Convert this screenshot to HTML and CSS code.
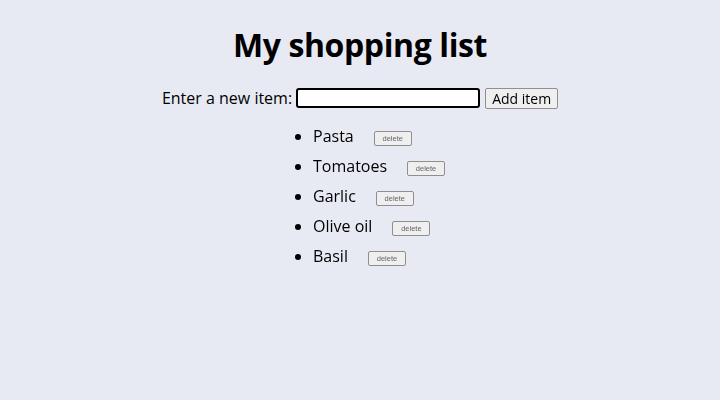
FILE: index.html
```html
<!DOCTYPE html>
<html>
<head>
<meta charset="utf-8">
<link rel="stylesheet" href="styles.css">
</head>
<body>
<main class="app">
  <h1 class="title">My shopping list</h1>
  <div class="entry">
    <label class="entry-label" for="item">Enter a new item:</label>
    <input class="entry-input" id="item" type="text" autofocus>
    <button class="add-btn">Add item</button>
  </div>
  <ul class="list">
    <li class="item"><span class="item-name">Pasta</span><button class="del-btn">delete</button></li>
    <li class="item"><span class="item-name">Tomatoes</span><button class="del-btn">delete</button></li>
    <li class="item"><span class="item-name">Garlic</span><button class="del-btn">delete</button></li>
    <li class="item"><span class="item-name">Olive oil</span><button class="del-btn">delete</button></li>
    <li class="item"><span class="item-name">Basil</span><button class="del-btn">delete</button></li>
  </ul>
</main>
</body>
</html>
```
FILE: styles.css
```css
html, body {
  margin: 0;
  padding: 0;
  background: #e8eaf3;
  font-family: "Open Sans", "Noto Sans", sans-serif;
  color: #000;
}
.app {
  display: flex;
  flex-direction: column;
  align-items: center;
  padding-top: 22px;
}
.title {
  margin: 0;
  font-size: 32px;
  font-weight: 700;
  line-height: 46px;
  letter-spacing: -0.4px;
}
.entry {
  display: flex;
  align-items: center;
  margin-top: 19px;
  height: 22px;
}
.entry-label {
  font-size: 16px;
  margin-right: 4px;
}
.entry-input {
  width: 184px;
  height: 20px;
  box-sizing: border-box;
  border: 2px solid #000;
  border-radius: 3px;
  background: #fff;
  padding: 0 4px;
  outline: none;
  font-size: 14px;
  margin: 0 5px 0 0;
}
.add-btn {
  height: 21px;
  box-sizing: border-box;
  font-family: inherit;
  font-size: 14px;
  padding: 0 6px;
  background: #efefef;
  border: 1px solid #8f8f8f;
  border-radius: 2px;
  color: #000;
}
.list {
  align-self: flex-start;
  margin: 17px 0 0 280px;
  padding: 0 0 0 33px;
}
.item {
  height: 30px;
  font-size: 16px;
  line-height: 20px;
}
.item-name {
  margin-right: 20px;
}
.del-btn {
  font-family: "Liberation Sans", Arial, sans-serif;
  font-size: 7.5px;
  height: 15px;
  width: 38px;
  padding: 0;
  background: #efefef;
  border: 1px solid #8f8f8f;
  border-radius: 2px;
  color: #666;
  vertical-align: middle;
  position: relative;
  top: 1px;
}
```
